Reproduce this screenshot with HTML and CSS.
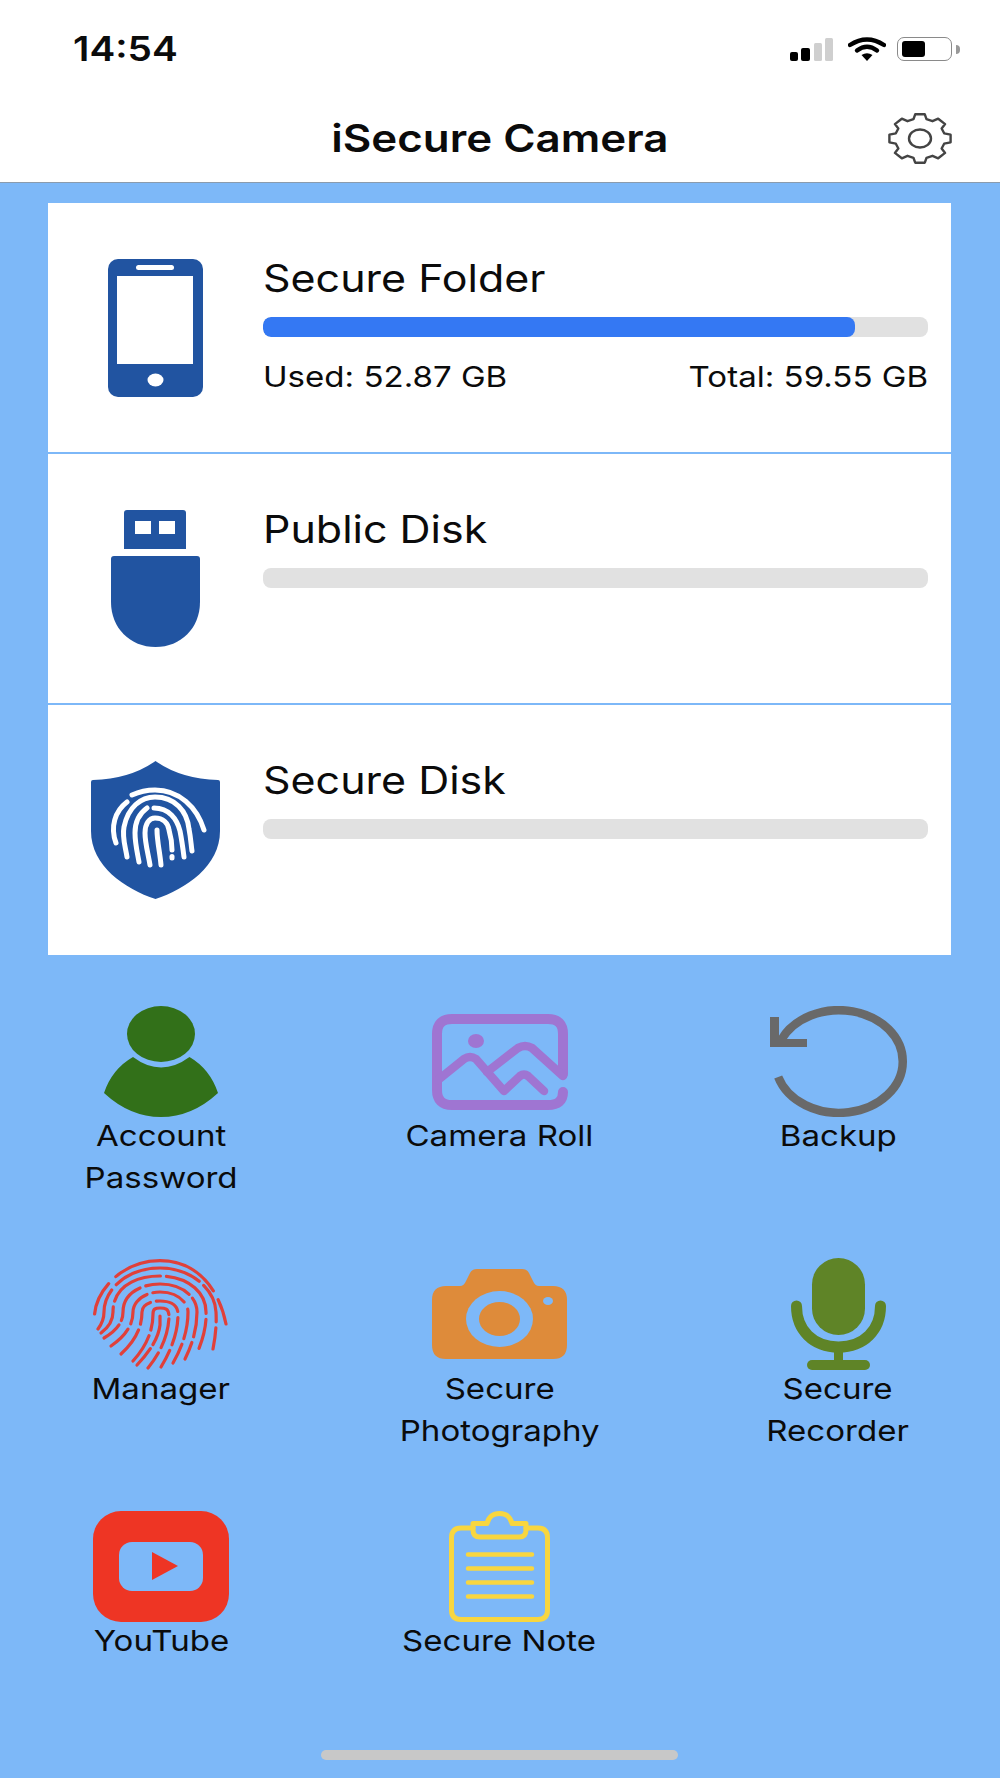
FILE: index.html
```html
<!DOCTYPE html>
<html lang="en">
<head>
  <meta charset="UTF-8">
  <title>iSecure Camera</title>
  <link rel="stylesheet" href="styles.css">
</head>
<body>
  <header class="top">
    <div class="status-bar">
      <span class="time">14:54</span>
      <div class="status-icons">
        <svg class="signal" width="43" height="23" viewBox="0 0 43 23">
          <rect x="0" y="14" width="8" height="9" rx="2" fill="#000"/>
          <rect x="11" y="10" width="9" height="13" rx="2" fill="#000"/>
          <rect x="24" y="5" width="8" height="18" rx="1.5" fill="#cfcfcf"/>
          <rect x="35" y="0" width="8" height="23" rx="1.5" fill="#cfcfcf"/>
        </svg>
        <svg class="wifi" width="38" height="24" viewBox="0 0 38 24">
          <path d="M2 8 Q19 -3 36 8" fill="none" stroke="#000" stroke-width="4.4" stroke-linecap="round"/>
          <path d="M9 13.5 Q19 6 29 13.5" fill="none" stroke="#000" stroke-width="4.4" stroke-linecap="round"/>
          <path d="M13.5 18 Q19 14.5 24.5 18 L19 24 Z" fill="#000"/>
        </svg>
        <div class="battery"><div class="battery-level"></div></div>
        <div class="battery-cap"></div>
      </div>
    </div>
    <div class="nav-bar">
      <h1>iSecure Camera</h1>
      <svg class="gear" width="64" height="51" viewBox="0 0 64 51">
        <path d="M25.5 6.2 27.2 1.3H36.8L38.5 6.2 44.5 8.2 50.2 5.7 57.1 11.1 53.65 15.5 56.15 20.3 62.6 21.7V29.3L56.15 30.7 53.65 35.5 57.1 39.9 50.2 45.3 44.5 42.8 38.5 44.8 36.8 49.7H27.2L25.5 44.8 19.5 42.8 13.8 45.3 6.9 39.9 10.35 35.5 7.85 30.7 1.4 29.3V21.7L7.85 20.3 10.35 15.5 6.9 11.1 13.8 5.7 19.5 8.2Z" fill="none" stroke="#444" stroke-width="2.4" stroke-linejoin="round"/>
        <ellipse cx="32" cy="25.5" rx="11" ry="9" fill="none" stroke="#444" stroke-width="2.4"/>
      </svg>
    </div>
  </header>

  <main class="content">
    <!-- storage list -->
    <section class="disks">
      <div class="disk">
        <div class="disk-icon">
          <svg width="95" height="138" viewBox="0 0 95 138">
            <rect width="95" height="138" rx="10" fill="#2154a1"/>
            <rect x="9" y="17" width="76" height="88" fill="#fff"/>
            <rect x="28" y="6" width="38" height="5" rx="2.5" fill="#fff"/>
            <ellipse cx="47.5" cy="121" rx="8" ry="6.5" fill="#fff"/>
          </svg>
        </div>
        <div class="disk-info">
          <h2>Secure Folder</h2>
          <div class="bar"><div class="bar-fill" style="width: 89%"></div></div>
          <div class="disk-stats"><span>Used: 52.87 GB</span><span>Total: 59.55 GB</span></div>
        </div>
      </div>
      <div class="disk">
        <div class="disk-icon">
          <svg width="89" height="137" viewBox="0 0 89 137">
            <path d="M13 3Q13 0 16 0H72Q75 0 75 3V39H13Z" fill="#2154a1"/>
            <rect x="24" y="11" width="16" height="13" fill="#fff"/>
            <rect x="48" y="11" width="16" height="13" fill="#fff"/>
            <path d="M0 49Q0 46 3 46H86Q89 46 89 49V92C89 118 70 137 44.5 137C19 137 0 118 0 92Z" fill="#2154a1"/>
          </svg>
        </div>
        <div class="disk-info">
          <h2>Public Disk</h2>
          <div class="bar"></div>
        </div>
      </div>
      <div class="disk">
        <div class="disk-icon">
          <svg width="129" height="138" viewBox="0 0 129 138">
            <path d="M64.5 0Q90 18 127 19Q129 19 129 21V70C129 105 95 128 64.5 138C34 128 0 105 0 70V21Q0 19 2 19Q39 18 64.5 0Z" fill="#2154a1"/>
            <g fill="none" stroke="#fff" stroke-width="5" stroke-linecap="round">
              <path d="M41 34Q52 29 64 29C88 29 106 46 113 69"/>
              <path d="M25 82C19 66 24 50 36 41"/>
              <path d="M36 96C34 84 31 76 33 66C37 46 50 36 64 36C84 36 96 50 98 68C100 78 100 84 101 90"/>
              <path d="M48 101C46 90 44 82 44 72C44 60 49 52 56 47"/>
              <path d="M63 47C78 47 86 58 89 70C91 80 92 88 93 96"/>
              <path d="M59 104C57 92 54 82 54 72C54 63 58 57 64 57C72 57 77 62 78 69C80 76 81 82 81 89"/>
              <path d="M70 104C69 92 66 80 66 69"/>
              <path d="M81 95.500V97"/>
            </g>
          </svg>
        </div>
        <div class="disk-info">
          <h2>Secure Disk</h2>
          <div class="bar"></div>
        </div>
      </div>
    </section>

    <!-- shortcuts -->
    <section class="tools">
      <div class="tool">
        <div class="tool-icon">
          <svg width="114" height="111" viewBox="0 0 114 111">
            <ellipse cx="57" cy="28" rx="34" ry="28" fill="#327019"/>
            <path d="M0 87Q8 63 29 51Q57 72 85.5 51Q106 63 114 87Q88 111 57 111Q26 111 0 87Z" fill="#327019"/>
          </svg>
        </div>
        <p>Account<br>Password</p>
      </div>
      <div class="tool">
        <div class="tool-icon">
          <svg width="136" height="96" viewBox="0 0 136 96">
            <g fill="none" stroke="#9f75d2" stroke-linecap="round" stroke-linejoin="round">
              <path stroke-width="10" d="M131 78Q131 91 116 91H20Q5 91 5 76V20Q5 5 20 5H116Q131 5 131 20V60"/>
              <path stroke-width="8.500" d="M6 66L32 45Q38 41 44 45L72 77L88 62Q92 59 96 62L112 77"/>
              <path stroke-width="8.500" d="M55 58L86 34Q93 30 100 34L131 62"/>
            </g>
            <ellipse cx="44" cy="27" rx="8" ry="7" fill="#9f75d2"/>
          </svg>
        </div>
        <p>Camera Roll</p>
      </div>
      <div class="tool">
        <div class="tool-icon">
          <svg width="137" height="111" viewBox="0 0 137 111">
            <path d="M8.2 71A63.75 51.25 0 0 0 132.75 55.5A63.75 51.25 0 0 0 11.1 34" fill="none" stroke="#696969" stroke-width="8.500"/>
            <path d="M0 11H9V33H37V41H0Z" fill="#696969"/>
          </svg>
        </div>
        <p>Backup</p>
      </div>
      <div class="tool">
        <div class="tool-icon">
          <svg width="136" height="111" viewBox="0 0 136 111">
            <g fill="none" stroke="#e0403a" stroke-width="3.200" stroke-linecap="round">
              <path d="M1.600 55C4 30 30 1.600 67 1.600C100 1.600 125 25 133 65" stroke-dasharray="34 10 112 10 60 8"/>
              <path d="M5 70Q11 62 11 53C11 30 35 9 67 9C98 9 122 30 123 53Q124 70 120 90" stroke-dasharray="42 7 90 6 40 6 40"/>
              <path d="M8 74Q20 65 20 53C20 28 42 17 67 17C93 17 113 32 113 53Q114 70 105 92" stroke-dasharray="30 6 56 6 60 6 30 8 40"/>
              <path d="M11 79Q30 68 30 53C30 36 46 25 67 25C88 25 104 37 104 53Q104 76 92 100" stroke-dasharray="20 5 40 6 46 5 40 6 40"/>
              <path d="M18 87Q40 72 40 53C40 42 52 33 67 33C82 33 95 42 95 53Q95 78 80 104" stroke-dasharray="24 6 36 6 34 8 30 6 30"/>
              <path d="M28 95Q49 76 49 53C49 46 57 42 67 42C77 42 85 46 85 55Q85 80 68 108" stroke-dasharray="30 6 26 6 26 6 28 6 30"/>
              <path d="M40 102Q60 80 60 55C60 50 62 49 67 49C73 49 76 50 76 58Q75 84 55 109" stroke-dasharray="30 6 40 4 30 6 30"/>
              <path d="M67 57V66Q65 84 44 106" stroke-dasharray="30 5 30"/>
            </g>
          </svg>
        </div>
        <p>Manager</p>
      </div>
      <div class="tool">
        <div class="tool-icon">
          <svg width="135" height="90" viewBox="0 0 135 90">
            <path d="M0 31Q0 17 14 17H28Q32 17 34 12L38 4Q40 0 45 0H90Q95 0 97 4L101 12Q103 17 107 17H121Q135 17 135 31V76Q135 90 121 90H14Q0 90 0 76Z" fill="#de8b3a"/>
            <ellipse cx="67.5" cy="50" rx="33.5" ry="28" fill="#7db8f8"/>
            <ellipse cx="67.5" cy="50" rx="20.5" ry="17" fill="#de8b3a"/>
            <ellipse cx="116" cy="32" rx="5" ry="4" fill="#7db8f8"/>
          </svg>
        </div>
        <p>Secure<br>Photography</p>
      </div>
      <div class="tool">
        <div class="tool-icon">
          <svg width="95" height="112" viewBox="0 0 95 112">
            <rect x="21" y="0" width="53" height="77" rx="26.5" fill="#5f8427"/>
            <path d="M5.5 48C5.5 72 22 89 47.5 89C73 89 89.5 72 89.5 48" fill="none" stroke="#5f8427" stroke-width="11" stroke-linecap="round"/>
            <rect x="43" y="88" width="9" height="16" fill="#5f8427"/>
            <rect x="16" y="102" width="63" height="10" rx="5" fill="#5f8427"/>
          </svg>
        </div>
        <p>Secure<br>Recorder</p>
      </div>
      <div class="tool">
        <div class="tool-icon">
          <svg width="136" height="111" viewBox="0 0 136 111">
            <rect width="136" height="111" rx="28" fill="#ee3524"/>
            <rect x="26" y="31" width="84" height="49" rx="13" fill="#7db8f8"/>
            <path d="M59 41L85 55L59 69Z" fill="#ee3524"/>
          </svg>
        </div>
        <p>YouTube</p>
      </div>
      <div class="tool">
        <div class="tool-icon">
          <svg width="101" height="111" viewBox="0 0 101 111">
            <g fill="none" stroke="#f8d63f" stroke-linecap="round" stroke-linejoin="round">
              <path stroke-width="5" d="M24 17H12Q2.5 17 2.5 27V99Q2.5 108.5 12 108.5H89Q98.5 108.5 98.5 99V27Q98.5 17 89 17H77"/>
              <path stroke-width="5" d="M24 12.500H38C40 5 44 2.500 50.500 2.500C57 2.500 61 5 63 12.500H77V19Q77 26 70 26H31Q24 26 24 19Z"/>
              <path stroke-width="4.500" d="M19 43.500H83M19 57.500H83M19 71.500H83M19 85.500H83"/>
            </g>
          </svg>
        </div>
        <p>Secure Note</p>
      </div>
    </section>

    <div class="home-indicator"></div>
  </main>
</body>
</html>
```

FILE: styles.css
```css
* { margin: 0; padding: 0; box-sizing: border-box; }
body {
  width: 1000px;
  height: 1778px;
  overflow: hidden;
  background: #7db8f8;
  color: #0b0b0b;
  font-family: Inter, "Liberation Sans", sans-serif;
  display: flex;
  flex-direction: column;
}
svg { display: block; }

/* the whole screenshot is a bit wider than tall, so the text is too */
.time, h1, h2, .disk-stats span, .tool p { transform: scaleX(1.14); }
h1, h2, .tool p { width: fit-content; }

/* Header */
.top {
  height: 183px;
  background: #fff;
  border-bottom: 1px solid #8a9bad;
}
.status-bar {
  height: 98px;
  padding: 30px 40px 0 73px;
  display: flex;
  justify-content: space-between;
  align-items: flex-start;
}
.time {
  font-size: 34px;
  line-height: 37px;
  font-weight: 600;
  transform-origin: left center;
}
.status-icons {
  display: flex;
  align-items: center;
  padding-top: 7px;
}
.wifi { margin-left: 15px; }
.battery {
  width: 55px;
  height: 24px;
  margin-left: 11px;
  padding: 3px 4px;
  border: 1.5px solid #8a8a8a;
  border-radius: 7px;
}
.battery-level {
  width: 23px;
  height: 100%;
  background: #000;
  border-radius: 3px;
}
.battery-cap {
  width: 4px;
  height: 9px;
  margin-left: 4px;
  background: #999;
  border-radius: 0 4px 4px 0;
}
.nav-bar {
  position: relative;
  padding-top: 17px;
}
h1 {
  margin: 0 auto;
  font-size: 38.5px;
  line-height: 46px;
  font-weight: 600;
}
.gear {
  position: absolute;
  top: 15px;
  right: 48px;
}

/* Disks */
.content {
  flex: 1;
  padding: 20px 49px 0 48px;
  display: flex;
  flex-direction: column;
}
.disks { background: #fff; }
.disk {
  height: 251px;
  display: flex;
  border-bottom: 2px solid #7db8f8;
}
.disk:last-child { height: 250px; border-bottom: none; }
.disk-icon {
  width: 215px;
  display: flex;
  align-items: center;
  justify-content: center;
}
.disk-info {
  flex: 1;
  padding: 52px 23px 0 0;
}
h2 {
  font-size: 37.7px;
  line-height: 46px;
  font-weight: 400;
  transform-origin: left center;
}
.bar {
  height: 20px;
  margin-top: 16px;
  background: #e1e1e1;
  border-radius: 8px;
  overflow: hidden;
}
.bar-fill {
  height: 100%;
  background: #3478f3;
  border-radius: 8px;
}
.disk-stats {
  margin-top: 23px;
  display: flex;
  justify-content: space-between;
  font-size: 29px;
  line-height: 34px;
}
.disk-stats span { transform-origin: left center; }
.disk-stats span:last-child { transform-origin: right center; }

/* Shortcuts */
.tools {
  margin-top: 51px;
  display: grid;
  grid-template-columns: repeat(3, 226px);
  justify-content: space-between;
  row-gap: 57.5px;
}
.tool { height: 195px; }
.tool-icon {
  height: 111px;
  display: flex;
  align-items: center;
  justify-content: center;
}
.tool p {
  margin: -2px auto 0;
  text-align: center;
  font-size: 29px;
  line-height: 42px;
}

.home-indicator {
  width: 357px;
  height: 10px;
  margin: 44px auto 0;
  background: #c8c8c8;
  border-radius: 5px;
}
```
